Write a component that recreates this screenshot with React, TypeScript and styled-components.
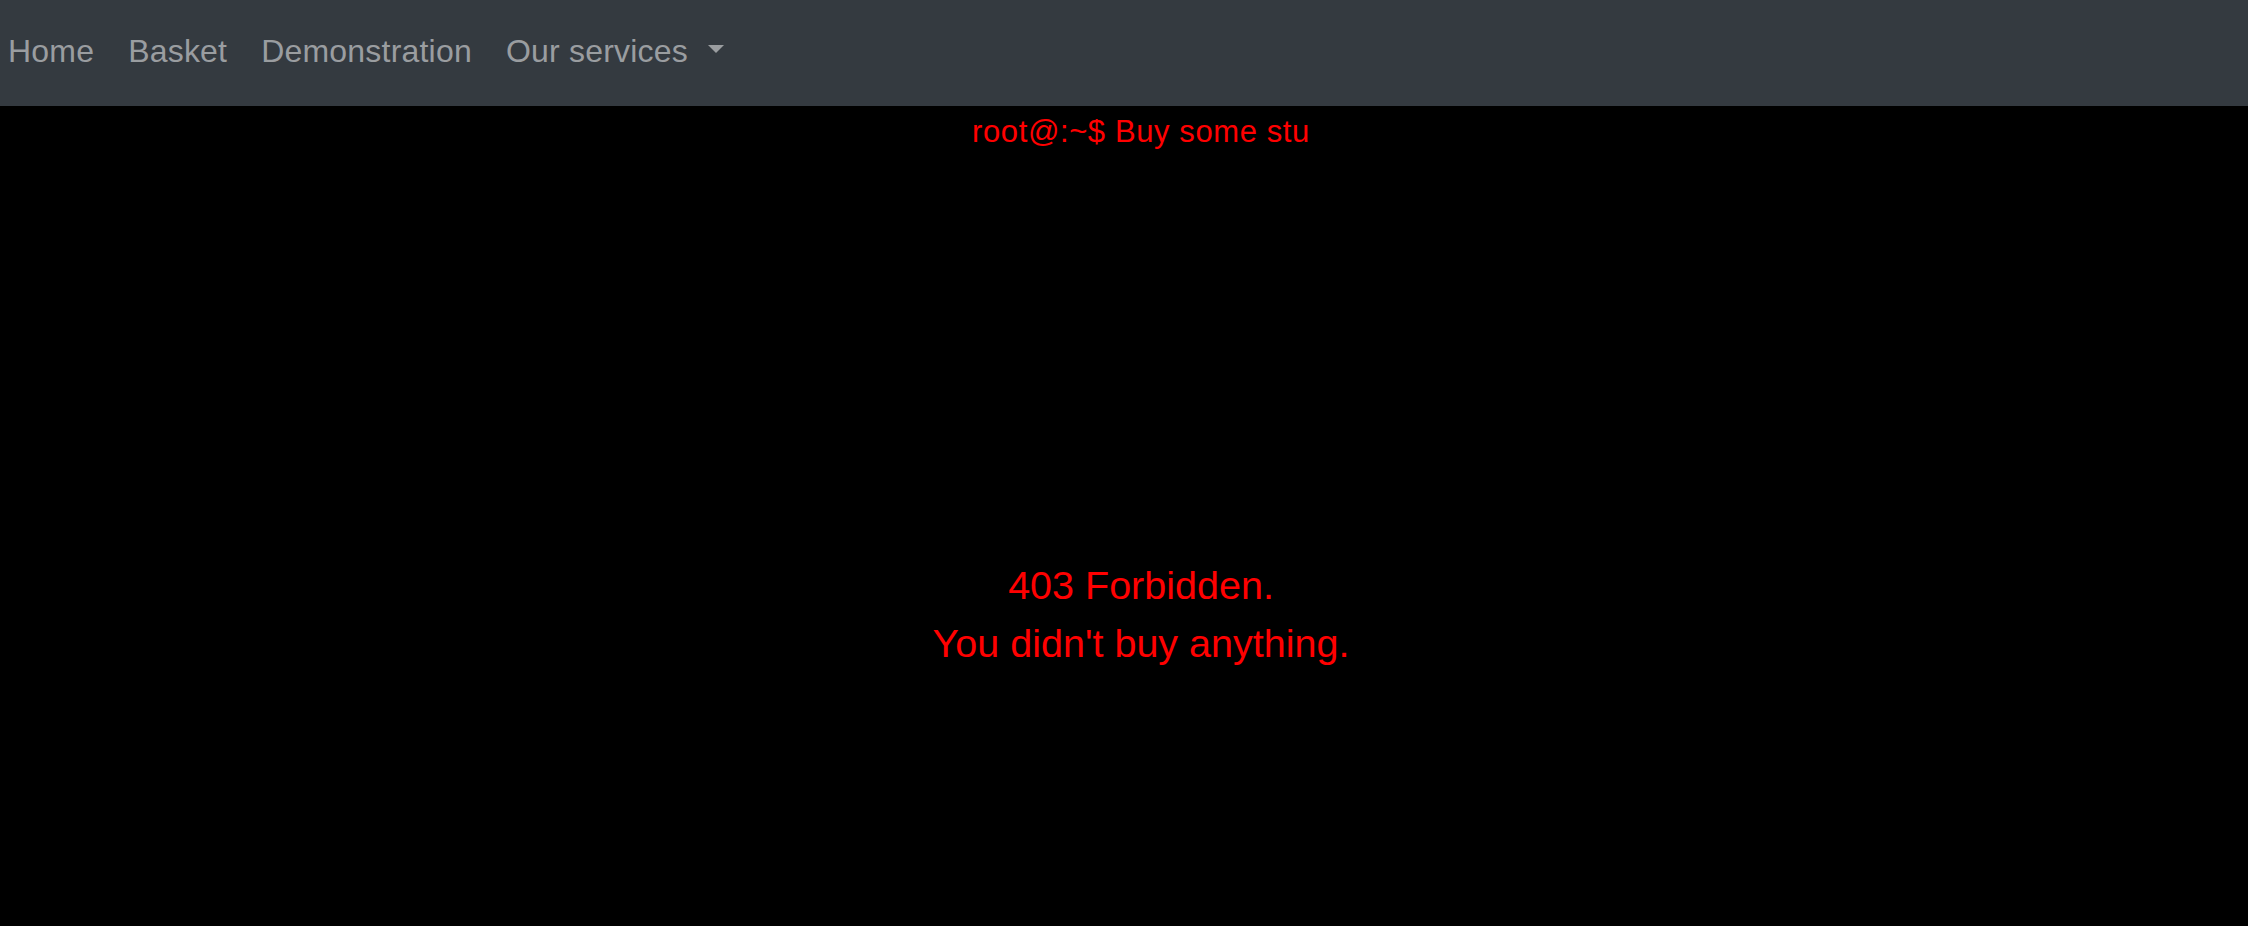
import React from 'react'
import styled, { createGlobalStyle } from 'styled-components'

const GlobalStyle = createGlobalStyle`
  html, body {
    margin: 0;
    padding: 0;
    background: #000;
    font-family: "Liberation Sans", Arial, sans-serif;
  }
`

const Page = styled.div`
  min-height: 926px;
  background: #000;
  display: flex;
  flex-direction: column;
`

const Navbar = styled.nav`
  height: 106px;
  box-sizing: border-box;
  background: #343a40;
  display: flex;
  align-items: flex-start;
  padding: 27px 0 0 8px;
  gap: 34px;
`

const NavLink = styled.a<{ $dropdown?: boolean }>`
  font-size: 32px;
  line-height: 48px;
  letter-spacing: 0.2px;
  color: #9a9da0;
  text-decoration: none;
  cursor: pointer;
  display: flex;
  align-items: center;

  ${(p) =>
    p.$dropdown &&
    `
    &::after {
      content: '';
      display: inline-block;
      margin-left: 20px;
      margin-top: -4px;
      border-top: 8px solid #9a9da0;
      border-left: 8.5px solid transparent;
      border-right: 8.5px solid transparent;
    }
  `}
`

const Terminal = styled.div`
  padding: 5px 0 0 34px;
  text-align: center;
  color: #ff0000;
  font-size: 31px;
  line-height: 42px;
  letter-spacing: 0.6px;
`

const Message = styled.div`
  margin-top: 403px;
  padding-left: 34px;
  text-align: center;
  color: #ff0000;
  font-size: 39.5px;
  line-height: 58px;
`

const App = () => {
  return (
    <Page>
      <GlobalStyle />
      <Navbar>
        <NavLink>Home</NavLink>
        <NavLink>Basket</NavLink>
        <NavLink>Demonstration</NavLink>
        <NavLink $dropdown>Our services</NavLink>
      </Navbar>
      <Terminal>root@:~$ Buy some stu</Terminal>
      <Message>
        403 Forbidden.
        <br />
        You didn't buy anything.
      </Message>
    </Page>
  )
}

export default App
